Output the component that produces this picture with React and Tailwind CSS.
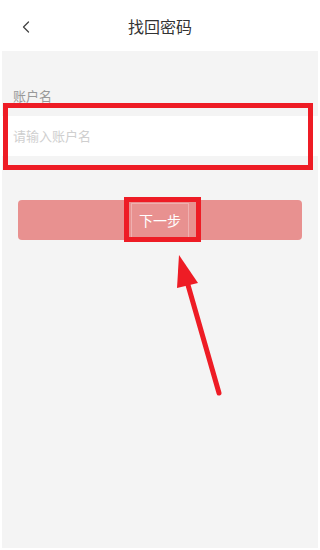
import { ChevronLeft } from 'lucide-react';

const font = { fontFamily: '"Noto Sans CJK SC", "Noto Sans", sans-serif' };

export default function App() {
  return (
    <div className="w-[320px] h-[550px] bg-white px-[2px] pb-[2px] flex flex-col relative overflow-hidden" style={font}>
      <header className="h-[51px] shrink-0 relative flex items-center justify-center bg-white">
        <ChevronLeft className="absolute left-[14px] top-[17px] w-[20px] h-[20px] text-[#444]" strokeWidth={1.5} />
        <h1 className="text-[16px] text-[#333] leading-none">找回密码</h1>
      </header>

      <main className="flex-1 bg-[#f4f4f4] flex flex-col">
        <label className="mt-[37px] pl-[11px] text-[13px] leading-[16px] text-[#999]">账户名</label>
        <div className="mt-[12px] h-[40px] bg-white flex items-center pl-[11px]">
          <span className="text-[13px] text-[#cfcfcf]">请输入账户名</span>
        </div>
        <button className="mt-[44px] mx-[16px] h-[40px] rounded-[4px] bg-[#e89190] text-white text-[14px] flex items-center justify-center">
          <span className="px-[7px] py-[6px] border border-[#f0b0b0]">下一步</span>
        </button>
      </main>

      {/* annotation overlays */}
      <div className="absolute left-[3px] top-[103px] w-[310px] h-[67px] border-[5px] border-[#ee1c25] pointer-events-none" />
      <div className="absolute left-[124px] top-[197px] w-[77px] h-[45px] border-[5px] border-[#ee1c25] pointer-events-none" />
      <svg className="absolute left-0 top-0 pointer-events-none" width="320" height="550">
        <line x1="219" y1="393" x2="186" y2="278" stroke="#ee1c25" strokeWidth="5" strokeLinecap="round" />
        <polygon points="179,255 177,288 198,283" fill="#ee1c25" />
      </svg>
    </div>
  );
}
